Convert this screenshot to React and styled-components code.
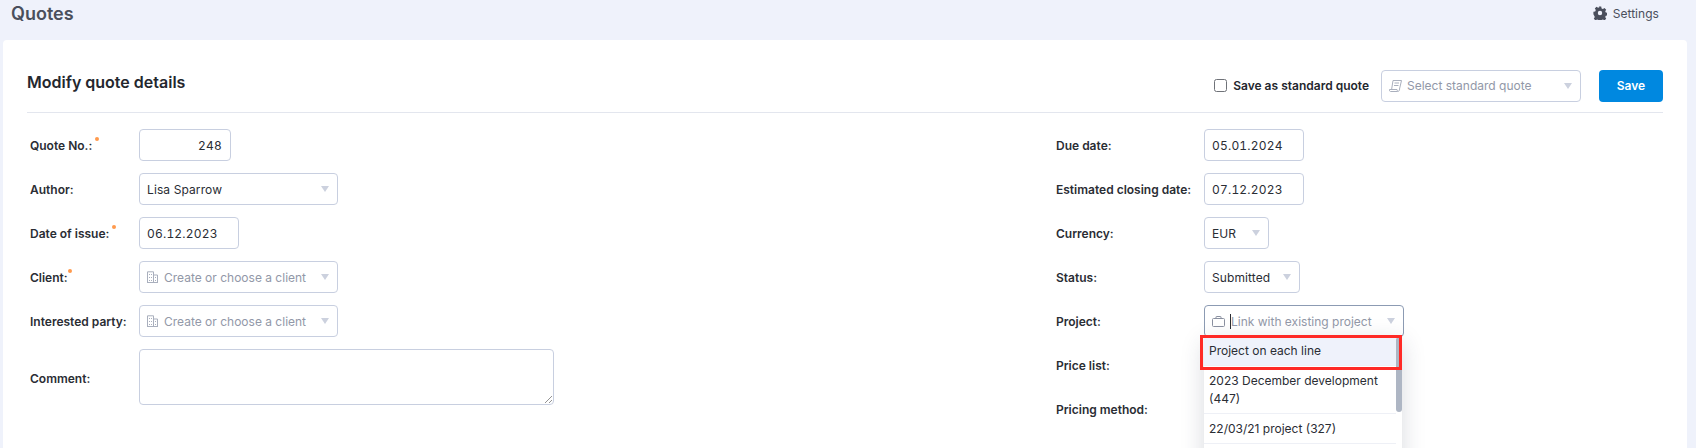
import React from "react";
import styled, { createGlobalStyle } from "styled-components";

const Global = createGlobalStyle`
  html, body { margin: 0; padding: 0; height: 448px; overflow: hidden; background: #eff2fb; }
  body { font-family: Inter, "Liberation Sans", sans-serif; color: #24272e; }
  * { box-sizing: border-box; }
`;

const Page = styled.div`
  width: 1696px;
  height: 448px;
  overflow: hidden;
  display: flex;
  flex-direction: column;
`;
const TopBar = styled.div`
  height: 40px;
  flex: none;
  display: flex;
  justify-content: space-between;
  padding: 0 37px 0 11px;
`;
const PageTitle = styled.h1`
  margin: 3px 0 0;
  font-size: 18px;
  line-height: 22px;
  font-weight: 600;
  color: #4a4f5c;
`;
const SettingsLink = styled.div`
  display: flex;
  align-items: center;
  gap: 6px;
  height: 26px;
  font-size: 12px;
  letter-spacing: 0.05px;
  color: #4a4f5c;
`;
const Card = styled.main`
  margin: 0 9px 0 3px;
  flex: 1;
  background: #fff;
  border-radius: 4px 4px 0 0;
  padding: 30px 24px 0 24px;
`;
const CardHeader = styled.header`
  height: 43px;
  padding-bottom: 11px;
  border-bottom: 1px solid #e3e6ee;
  display: flex;
  align-items: center;
`;
const CardTitle = styled.h2`
  margin: 0 auto 8px 0;
  font-size: 16px;
  line-height: 24px;
  font-weight: 600;
  color: #24272e;
`;
const CheckLabel = styled.label`
  display: flex;
  align-items: center;
  gap: 6px;
  font-size: 12px;
  font-weight: 600;
  margin-right: 12px;
`;
const CheckBox = styled.span`
  width: 13px;
  height: 13px;
  border: 1px solid #6f7278;
  border-radius: 2.5px;
  display: block;
`;
const SaveButton = styled.button`
  width: 64px;
  height: 32px;
  margin-left: 18px;
  border: 0;
  border-radius: 4px;
  background: #0088e0;
  color: #fff;
  font: 600 12px Inter, sans-serif;
`;
const FormGrid = styled.div`
  display: grid;
  grid-template-columns: 1026px 1fr;
  padding: 16px 0 0 3px;
`;
const Column = styled.div`
  display: flex;
  flex-direction: column;
  gap: 12px;
`;
const Row = styled.div`
  display: flex;
  align-items: center;
  min-height: 32px;
`;
const Label = styled.div`
  flex: none;
  width: ${p => p.$width}px;
  margin-top: ${p => p.$drop || 0}px;
  font-size: 12px;
  font-weight: 600;
  color: #2a2d34;
`;
const Required = styled.sup`
  display: inline-block;
  width: 4px;
  height: 4px;
  margin-left: ${p => (p.$tight ? 0 : 3)}px;
  border-radius: 50%;
  background: #ff9a4d;
  vertical-align: 9px;
`;
const Field = styled.div`
  width: ${p => p.$width}px;
  height: 32px;
  flex: none;
  position: relative;
  display: flex;
  align-items: center;
  justify-content: ${p => (p.$right ? "flex-end" : "flex-start")};
  padding: ${p => (p.$icon ? "0 8px 0 7px" : "0 8px 0 7px")};
  background: #fff;
  border: 1px solid ${p => (p.$focused ? "#8c9bb3" : "#c8cfe0")};
  border-radius: 4px;
  font-size: 12px;
  letter-spacing: ${p => (p.$digits ? "0.2px" : "0.1px")};
  font-variant-numeric: ${p => (p.$digits ? "tabular-nums" : "normal")};
  color: #2a2d34;
`;
const Placeholder = styled.span`
  color: #9298a8;
  white-space: nowrap;
  letter-spacing: 0;
`;
const Caret = styled.span`
  width: 1px;
  height: 15px;
  background: #2a2d34;
`;
const Arrow = styled.span`
  position: absolute;
  right: 8px;
  top: 12px;
  width: 0;
  height: 0;
  border-left: 4px solid transparent;
  border-right: 4px solid transparent;
  border-top: 6px solid #ccd1de;
`;
const IconSlot = styled.span`
  display: flex;
  flex: none;
  margin-right: ${p => p.$gap || 6}px;
`;
const CommentBox = styled.div`
  width: 415px;
  height: 56px;
  flex: none;
  border: 1px solid #c8cfe0;
  border-radius: 4px;
  position: relative;
`;
const Grip = styled.svg`
  position: absolute;
  right: 1px;
  bottom: 1px;
`;
const RightRow = styled(Row)`
  position: relative;
`;
const Menu = styled.div`
  position: absolute;
  left: 148px;
  top: 31px;
  width: 198px;
  background: #fff;
  box-shadow: 0 6px 22px rgba(40, 50, 80, 0.18);
  z-index: 2;
`;
const MenuItem = styled.div`
  width: 192px;
  padding: 6px 5px 5px;
  font-size: 12px;
  line-height: 18px;
  color: #2a2d34;
  background: ${p => (p.$active ? "#eff2fb" : "#fff")};
  border-bottom: 1px solid #eef0f6;
`;
const Scrollbar = styled.span`
  position: absolute;
  right: 0;
  top: 1px;
  width: 6px;
  height: 75px;
  background: #aeb6c4;
  border-radius: 3px;
`;
const Highlight = styled.div`
  position: absolute;
  left: -4px;
  top: -1px;
  width: 202px;
  height: 35px;
  border: 3px solid #ff2a26;
  z-index: 3;
`;

const GearIcon = () => (
  <svg width="14" height="14" viewBox="0 0 14 14" fill="#4a4f5c">
    <path d="M5.8.6h2.4l.4 1.8 1.3.6 1.6-1 1.7 1.7-1 1.6.6 1.3 1.8.4v2.4l-1.8.4-.6 1.3 1 1.6-1.7 1.7-1.6-1-1.3.6-.4 1.8H5.8l-.4-1.8-1.3-.6-1.6 1-1.7-1.7 1-1.6-.6-1.3L.4 8.2V5.8l1.8-.4.6-1.3-1-1.6 1.7-1.7 1.6 1 1.3-.6zM7 4.8a2.2 2.2 0 1 0 0 4.4 2.2 2.2 0 0 0 0-4.4z" />
  </svg>
);
const BuildingIcon = () => (
  <svg width="11" height="12" viewBox="0 0 11 12" fill="none" stroke="#a9afbd" strokeWidth="1">
    <path d="M.5 11.5V.8h6v10.7M6.5 4h4v7.5M0 11.5h11M2.5 3v1M4.5 3v1M2.5 6v1M4.5 6v1M2.5 9v1M4.5 9v1M8.5 6v1M8.5 9v1" />
  </svg>
);
const BriefcaseIcon = () => (
  <svg width="13" height="11" viewBox="0 0 13 11" fill="none" stroke="#8a90a0" strokeWidth="1">
    <rect x="0.5" y="2.5" width="12" height="8" rx="1" />
    <path d="M4 2.5V1a.5.5 0 0 1 .5-.5h4A.5.5 0 0 1 9 1v1.5" />
  </svg>
);
const QuoteIcon = () => (
  <svg width="13" height="12" viewBox="0 0 13 12" fill="none" stroke="#a9afbd" strokeWidth="1">
    <path d="M4 .5h8.5L10.5 9a2 2 0 0 1-2 2.5H1.5A1.5 1.5 0 0 1 .5 9.5h7.5c0 1 .5 1.5 1 1.5M4 .5 2.6 9.5M5.5 3h4.5M5 5.5h4.5" />
  </svg>
);

const leftLabel = 109;
const rightLabel = 148;

export default function App() {
  return (
    <Page>
      <Global />
      <TopBar>
        <PageTitle>Quotes</PageTitle>
        <SettingsLink><GearIcon />Settings</SettingsLink>
      </TopBar>
      <Card>
        <CardHeader>
          <CardTitle>Modify quote details</CardTitle>
          <CheckLabel><CheckBox />Save as standard quote</CheckLabel>
          <Field $width={200} $icon>
            <IconSlot $gap={5}><QuoteIcon /></IconSlot>
            <Placeholder>Select standard quote</Placeholder>
            <Arrow />
          </Field>
          <SaveButton>Save</SaveButton>
        </CardHeader>
        <FormGrid>
          <Column>
            <Row>
              <Label $width={leftLabel}>Quote No.:<Required /></Label>
              <Field $width={92} $right $digits>248</Field>
            </Row>
            <Row>
              <Label $width={leftLabel}>Author:</Label>
              <Field $width={199}>Lisa Sparrow<Arrow /></Field>
            </Row>
            <Row>
              <Label $width={leftLabel}>Date of issue:<Required /></Label>
              <Field $width={100} $digits>06.12.2023</Field>
            </Row>
            <Row>
              <Label $width={leftLabel}>Client:<Required $tight /></Label>
              <Field $width={199} $icon>
                <IconSlot><BuildingIcon /></IconSlot>
                <Placeholder>Create or choose a client</Placeholder>
                <Arrow />
              </Field>
            </Row>
            <Row>
              <Label $width={leftLabel}>Interested party:</Label>
              <Field $width={199} $icon>
                <IconSlot><BuildingIcon /></IconSlot>
                <Placeholder>Create or choose a client</Placeholder>
                <Arrow />
              </Field>
            </Row>
            <Row>
              <Label $width={leftLabel} $drop={3}>Comment:</Label>
              <CommentBox>
                <Grip width="7" height="7" viewBox="0 0 7 7" stroke="#777" strokeWidth="0.8">
                  <path d="M0 7 7 0M4 7l3-3" />
                </Grip>
              </CommentBox>
            </Row>
          </Column>
          <Column>
            <Row>
              <Label $width={rightLabel}>Due date:</Label>
              <Field $width={100} $digits>05.01.2024</Field>
            </Row>
            <Row>
              <Label $width={rightLabel}>Estimated closing date:</Label>
              <Field $width={100} $digits>07.12.2023</Field>
            </Row>
            <Row>
              <Label $width={rightLabel}>Currency:</Label>
              <Field $width={65}>EUR<Arrow /></Field>
            </Row>
            <Row>
              <Label $width={rightLabel}>Status:</Label>
              <Field $width={96}>Submitted<Arrow /></Field>
            </Row>
            <RightRow>
              <Label $width={rightLabel}>Project:</Label>
              <Field $width={200} $icon $focused>
                <IconSlot $gap={5}><BriefcaseIcon /></IconSlot>
                <Caret />
                <Placeholder>Link with existing project</Placeholder>
                <Arrow />
              </Field>
              <Menu>
                <Highlight />
                <MenuItem $active>Project on each line</MenuItem>
                <MenuItem>2023 December development (447)</MenuItem>
                <MenuItem>22/03/21 project (327)</MenuItem>
                <MenuItem>&nbsp;</MenuItem>
                <Scrollbar />
              </Menu>
            </RightRow>
            <Row>
              <Label $width={rightLabel}>Price list:</Label>
            </Row>
            <Row>
              <Label $width={rightLabel}>Pricing method:</Label>
            </Row>
          </Column>
        </FormGrid>
      </Card>
    </Page>
  );
}
